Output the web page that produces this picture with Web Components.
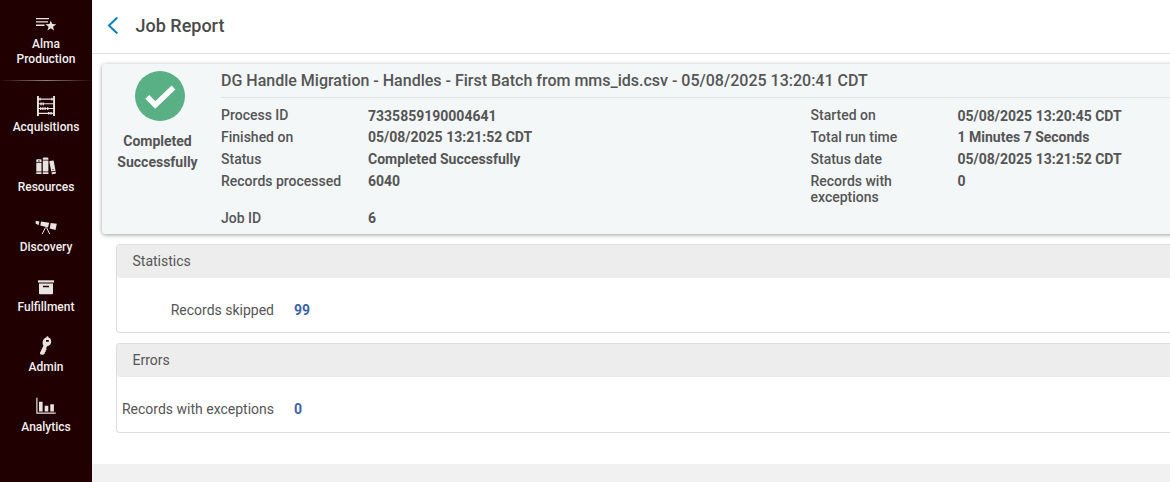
<!DOCTYPE html>
<html lang="en">
<head>
<meta charset="utf-8">
<title>Job Report</title>
<style>
  html, body { margin: 0; height: 100%; overflow: hidden; background: #fff; }
  body { font-family: Roboto, "Liberation Sans", sans-serif; color: #555; }
</style>
</head>
<body>
<app-shell>
  <side-nav slot="nav">
    <nav-item icon="menu" class="top">Alma<br>Production</nav-item>
    <nav-item icon="abacus">Acquisitions</nav-item>
    <nav-item icon="books">Resources</nav-item>
    <nav-item icon="scope">Discovery</nav-item>
    <nav-item icon="box">Fulfillment</nav-item>
    <nav-item icon="key">Admin</nav-item>
    <nav-item icon="chart">Analytics</nav-item>
  </side-nav>
  <page-header>Job Report</page-header>
  <job-summary>
    <span slot="status">Completed Successfully</span>
    <span slot="title">DG Handle Migration - Handles - First Batch from mms_ids.csv - 05/08/2025 13:20:41 CDT</span>
    <summary-field label="Process ID" class="first">7335859190004641</summary-field>
    <summary-field label="Started on" class="first">05/08/2025 13:20:45 CDT</summary-field>
    <summary-field label="Finished on">05/08/2025 13:21:52 CDT</summary-field>
    <summary-field label="Total run time">1 Minutes 7 Seconds</summary-field>
    <summary-field label="Status">Completed Successfully</summary-field>
    <summary-field label="Status date">05/08/2025 13:21:52 CDT</summary-field>
    <summary-field label="Records processed">6040</summary-field>
    <summary-field label="Records with exceptions" class="wrap">0</summary-field>
    <summary-field label="Job ID">6</summary-field>
  </job-summary>
  <report-panel heading="Statistics" label="Records skipped" style="height:87px">99</report-panel>
  <report-panel heading="Errors" label="Records with exceptions" style="height:88px">0</report-panel>
</app-shell>

<script>
const define = (name, html, setup) => {
  const template = document.createElement('template');
  template.innerHTML = html;
  customElements.define(name, class extends HTMLElement {
    constructor() {
      super();
      this.attachShadow({ mode: 'open' }).append(template.content.cloneNode(true));
    }
    connectedCallback() { if (setup) setup(this, this.shadowRoot); }
  });
};

const icons = {
  menu: '<path d="M0 4h13v1.300H0zM0 7.300h12v1.300H0zM0 10.600h8.500v1.300H0z"/><path d="M14.800 6.400l1.350 3.700 4.150.2-3.300 2.400 1.100 3.800-3.300-2.200-3.300 2.200 1.100-3.800-3.100-2.400 3.950-.2z"/>',
  abacus: '<path d="M1 0h1.900v20H1zM17.100 0H19v20h-1.900zM2 2.500h16v1.200H2zM2 7.300h16v1H2zM2 12h16v1H2zM2 16.700h16v1.200H2z"/><path d="M3.500 1.800h1.200v2.600H3.500zM15.300 1.800h1.200v2.600h-1.200zM4.300 6.500h1.400v2.700H4.300zM6.500 6.500h1.400v2.700H6.500zM4 11.200h1.400v2.700H4zM6.200 11.200h1.400v2.700H6.200zM8.400 11.200h1.400v2.700H8.400zM11 11.200h1.400v2.700H11zM12 15.900h1.400v2.700H12zM14.300 15.900h1.400v2.700h-1.400z"/>',
  books: '<g transform="translate(0 1)"><path d="M1.200 2.200h3.300q1 0 1 1v2H.3V3.200q0-1 .9-1zM.3 6h5.200v8.500H.3zM.3 15.300h5.200V17H.3zM7.800.5h3.600q1 0 1 1v1.200H6.800V1.500q0-1 1-1zM6.800 3.500h5.600v11H6.800zM6.800 15.300h5.600V17H6.800z"/><path d="M13.300 4.800q0-.6.600-.7l2.900-.6q.8-.1 1 .7l1.700 9.500-4.200.9zM15.500 15.500l4.200-.9.200 1.400q0 .6-.6.700l-2.700.5q-.7.1-.9-.6z"/><circle cx="2.900" cy="4" r=".7" fill="#200000"/><circle cx="17" cy="12.500" r=".6" fill="#200000"/></g>',
  scope: '<path d="M-.3 4.800l3.700.8-.8 3.700-3-1.900zM5 5.600l8.200 1.200-1.200 4.800-7.700-2zM14.600 7l6.200.7-1.300 6.200-5.700-1.300z"/><path d="M9.500 11.500L6.200 18M10.500 11.500l3.200 6.500" fill="none" stroke="#e8e4e2" stroke-width="1"/>',
  box: '<g transform="translate(0 1.800)"><path d="M2 2.500h16v2.200H2z"/><path fill-rule="evenodd" d="M3 5.700h14v9.800q0 1-1 1H4q-1 0-1-1zM7 8v1.400h6V8z"/></g>',
  key: '<path fill-rule="evenodd" d="M9.300 1.800l1-.3q.1-1.200 1.100-1.200t1.200 1.200q2.600.9 2.600 3.700 0 3.600-3.200 4.900l-1.200.4-.6 1.800.6.900-1.200 1.200.2 1.300-1 .5.200 1.100-1.800 1.500-2.700-.2-.6-1.600 3.500-7.300q-1.200-1.600-.7-4.100.5-2.800 2.600-3.800zM10 4v1.700h2.800V4z"/>',
  chart: '<g transform="translate(0 1)"><path d="M.3.800h1.200v14.700h18.200v1.200H.3zM3 4.700h3.600v9.800H3zM8.700 8.700h3.600v5.800H8.700zM14.300 7.200h3.600v7.300h-3.600z"/></g>'
};

define('app-shell', `
<style>
  :host { display: flex; height: 482px; }
  main { flex: 1; min-width: 0; overflow: hidden; display: flex; flex-direction: column; }
  footer { margin-top: auto; height: 18px; background: #f1f1f1; }
</style>
<slot name="nav"></slot><main><slot></slot><footer></footer></main>`);

define('side-nav', `
<style>
  :host { display: flex; flex-direction: column; flex: none; width: 92px; background: #200000; }
  ::slotted(.top) { --text-gap: 3px; height: 81px !important; border-bottom: 1px solid; border-image: linear-gradient(90deg, #200000, #8d7f7c 50%, #200000) 1; margin-bottom: 10px; padding-top: 14px !important; }
</style><slot></slot>`);

define('nav-item', `
<style>
  :host { display: flex; flex-direction: column; align-items: center; height: 60px; padding-top: 5px; box-sizing: border-box; color: #f2efee; font-size: 12px; font-weight: 500; line-height: 15px; text-align: center; }
  svg { width: 20px; height: 20px; flex: none; overflow: visible; fill: #e8e4e2; }
  .text { margin-top: var(--text-gap, 4px); }
</style>
<svg viewBox="0 0 20 20"></svg><div class="text"><slot></slot></div>`,
(el, root) => { root.querySelector('svg').innerHTML = icons[el.getAttribute('icon')]; });

define('page-header', `
<style>
  :host { display: flex; flex: none; align-items: center; height: 54px; padding: 0 0 2px 15px; box-sizing: border-box; border-bottom: 1px solid #e0e0e0; font-size: 18px; font-weight: 500; color: #4a4a4a; }
  svg { width: 12px; height: 18px; margin-right: 16.500px; }
</style>
<svg viewBox="0 0 12 18"><path d="M10.300 .5L2 8.500l8.300 8" fill="none" stroke="#0f7dc2" stroke-width="2"/></svg><slot></slot>`);

define('job-summary', `
<style>
  :host { display: flex; flex: none; height: 170px; margin: 10px -8px 0 10px; padding-right: 8px; box-sizing: border-box; background: #f3f7f8; border-radius: 4px 0 0 4px; box-shadow: 0 1px 4px rgba(0,0,0,.38); }
  aside { flex: none; width: 111px; padding: 7px 0 0; text-align: center; font-size: 14px; font-weight: 700; line-height: 21px; }
  svg { display: block; width: 50px; height: 50px; margin: 0 0 10px 33px; }
  .status { width: 90px; margin-left: 10.500px; }
  section { flex: 1; margin-left: 8px; min-width: 0; }
  h2 { margin: 0 0 9px; height: 34px; box-sizing: border-box; border-bottom: 1px solid #dde2e3; font-size: 16px; font-weight: 500; line-height: 34px; white-space: nowrap; }
  .fields { display: grid; grid-template-columns: 589.500px 1fr; row-gap: 6px; }
</style>
<aside>
  <svg viewBox="0 0 50 50"><circle cx="25" cy="25" r="25" fill="#58b084"/><path d="M12.300 25.800l8 8.200 18.200-17.500" fill="none" stroke="#fff" stroke-width="5.500"/></svg>
  <div class="status"><slot name="status"></slot></div>
</aside>
<section><h2><slot name="title"></slot></h2><div class="fields"><slot></slot></div></section>`);

define('summary-field', `
<style>
  :host { display: grid; grid-template-columns: 120px 1fr; column-gap: 27px; align-items: start; font-size: 14px; line-height: 16px; }
  .label { font-weight: 500; white-space: nowrap; }
  .value { font-weight: 700; }
  :host(.wrap) { height: 31px; }
  :host(.wrap) .label { white-space: normal; }
  :host(.first) { height: 16px; }
  :host(.first) .value { padding-top: 1px; }
</style>
<div class="label"></div><div class="value"><slot></slot></div>`,
(el, root) => { root.querySelector('.label').textContent = el.getAttribute('label'); });

define('report-panel', `
<style>
  :host { display: block; flex: none; margin: 10px 0 0 24px; border: 1px solid #dcdcdc; border-right: 0; border-radius: 4px 0 0 4px; font-size: 14px; }
  header { height: 33px; padding-left: 15.500px; line-height: 33px; background: #ededed; border-radius: 3px 0 0 4px; }
  .row { display: grid; grid-template-columns: 157px 1fr; column-gap: 20px; padding-top: 24px; line-height: 16px; }
  .label { text-align: right; white-space: nowrap; }
  .value { color: #3d63a8; font-weight: 700; }
</style>
<header></header><div class="row"><div class="label"></div><div class="value"><slot></slot></div></div>`,
(el, root) => {
  root.querySelector('header').textContent = el.getAttribute('heading');
  root.querySelector('.label').textContent = el.getAttribute('label');
});
</script>
</body>
</html>
